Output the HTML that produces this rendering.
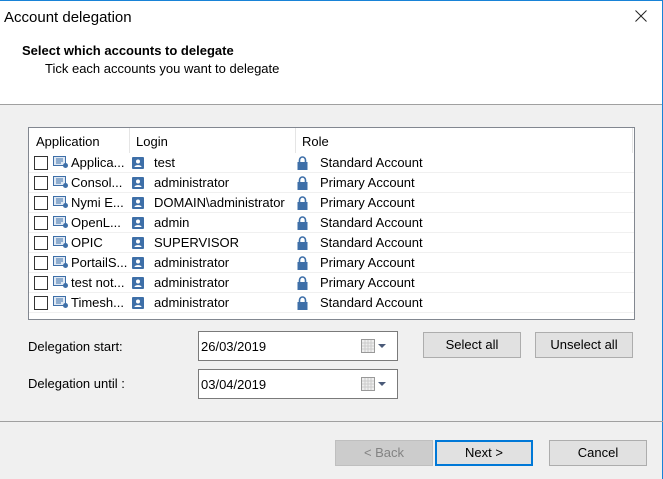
<!DOCTYPE html>
<html><head><style>
*{box-sizing:border-box;margin:0;padding:0}
body{width:663px;height:479px;background:#f0f0f0;font-family:"Liberation Sans",sans-serif;font-size:13px;color:#000;position:relative;overflow:hidden;border:1px solid #1883d7;border-bottom:none;border-left:none}
.abs{position:absolute}
.top{left:0;top:0;width:662px;height:104px;background:#fff;border-bottom:1px solid #a0a0a0}
.list{left:28px;top:126px;width:607px;height:193px;background:#fff;border:1px solid #828790}
.hdr{height:25px;position:relative}
.hdr span{position:absolute;top:6px}
.sep{position:absolute;top:0;width:1px;height:25px;background:#e5e5e5}
.row{height:20px;position:relative;border-bottom:1px solid #f0f0f0}
.row>*{position:absolute}
.cb{left:5px;top:3px;width:14px;height:14px;border:1px solid #333;background:#fff}
.ap{left:24px;top:3px;width:15px;height:12px}
.t{top:2px}
.usr{left:103px;top:4px;width:12px;height:12px;background:#3e6fa8;border-radius:1px}
.lock{left:268px;top:3px}
.in{left:198px;width:200px;height:30px;background:#fff;border:1px solid #7a7a7a;padding:7px 0 0 2px}
.btn{height:26px;background:#e1e1e1;border:1px solid #adadad;text-align:center;line-height:24px}
</style></head><body>
<div class="abs top"></div>
<div class="abs" style="left:4px;top:8px;font-size:15px">Account delegation</div>
<svg class="abs" style="left:635px;top:9px" width="12" height="12" viewBox="0 0 12 12"><path d="M0.5 0.5L11.5 11.5M11.5 0.5L0.5 11.5" stroke="#222" stroke-width="1"/></svg>
<div class="abs" style="left:22px;top:42px;font-weight:bold">Select which accounts to delegate</div>
<div class="abs" style="left:45px;top:60px">Tick each accounts you want to delegate</div>
<div class="abs list">
<div class="hdr"><span style="left:7px">Application</span><div class="sep" style="left:100px"></div><span style="left:107px">Login</span><div class="sep" style="left:266px"></div><span style="left:273px">Role</span><div class="sep" style="left:603px"></div></div>
<div id="rows"></div>
</div>
<script>
var d=[["Applica...","test","Standard Account"],["Consol...","administrator","Primary Account"],["Nymi E...","DOMAIN\\administrator","Primary Account"],["OpenL...","admin","Standard Account"],["OPIC","SUPERVISOR","Standard Account"],["PortailS...","administrator","Primary Account"],["test not...","administrator","Primary Account"],["Timesh...","administrator","Standard Account"]];
var h="";
d.forEach(function(r){h+='<div class="row"><div class="cb"></div><svg class="ap" viewBox="0 0 15 12"><rect x="0.5" y="0.5" width="12" height="9" fill="#dfe8f3" stroke="#3e6fa8"/><path d="M3 3h7M3 5h7M3 7h5" stroke="#3e6fa8"/><circle cx="12.5" cy="9.5" r="2.5" fill="#3e6fa8"/></svg><span class="t" style="left:42px">'+r[0]+'</span><div class="usr"><svg width="12" height="12" viewBox="0 0 12 12"><circle cx="6" cy="4.5" r="2" fill="#fff"/><path d="M2.5 10c0-2.5 7-2.5 7 0z" fill="#fff"/></svg></div><span class="t" style="left:125px">'+r[1]+'</span><svg class="lock" width="11" height="14" viewBox="0 0 11 14"><path d="M2.5 6V4a3 3 0 0 1 6 0v2" fill="none" stroke="#3e6fa8" stroke-width="1.6"/><rect x="0.5" y="6" width="10" height="8" fill="#3e6fa8"/></svg><span class="t" style="left:291px">'+r[2]+'</span></div>';});
document.getElementById("rows").innerHTML=h;
</script>
<div class="abs" style="left:28px;top:338px">Delegation start:</div>
<div class="abs" style="left:28px;top:375px">Delegation until :</div>
<div class="abs in" style="top:330px">26/03/2019<svg class="abs" style="right:6px;top:7px" width="30" height="14" viewBox="0 0 30 14"><rect x="0.5" y="0.5" width="13" height="13" fill="#eee" stroke="#999"/><path d="M1 4h12M1 7h12M1 10h12M4 1v12M7 1v12M10 1v12" stroke="#ccc"/><path d="M17 5h8l-4 4z" fill="#4a5a78"/></svg></div>
<div class="abs in" style="top:368px">03/04/2019<svg class="abs" style="right:6px;top:7px" width="30" height="14" viewBox="0 0 30 14"><rect x="0.5" y="0.5" width="13" height="13" fill="#eee" stroke="#999"/><path d="M1 4h12M1 7h12M1 10h12M4 1v12M7 1v12M10 1v12" stroke="#ccc"/><path d="M17 5h8l-4 4z" fill="#4a5a78"/></svg></div>
<div class="abs btn" style="left:423px;top:331px;width:98px">Select all</div>
<div class="abs btn" style="left:535px;top:331px;width:98px">Unselect all</div>
<div class="abs" style="left:0;top:420px;width:663px;height:1px;background:#a0a0a0"></div>
<div class="abs btn" style="left:335px;top:439px;width:98px;background:#cccccc;border-color:#bfbfbf;color:#838383">&lt; Back</div>
<div class="abs btn" style="left:435px;top:439px;width:98px;border:2px solid #0078d7;line-height:22px">Next &gt;</div>
<div class="abs btn" style="left:549px;top:439px;width:98px">Cancel</div>
</body></html>
